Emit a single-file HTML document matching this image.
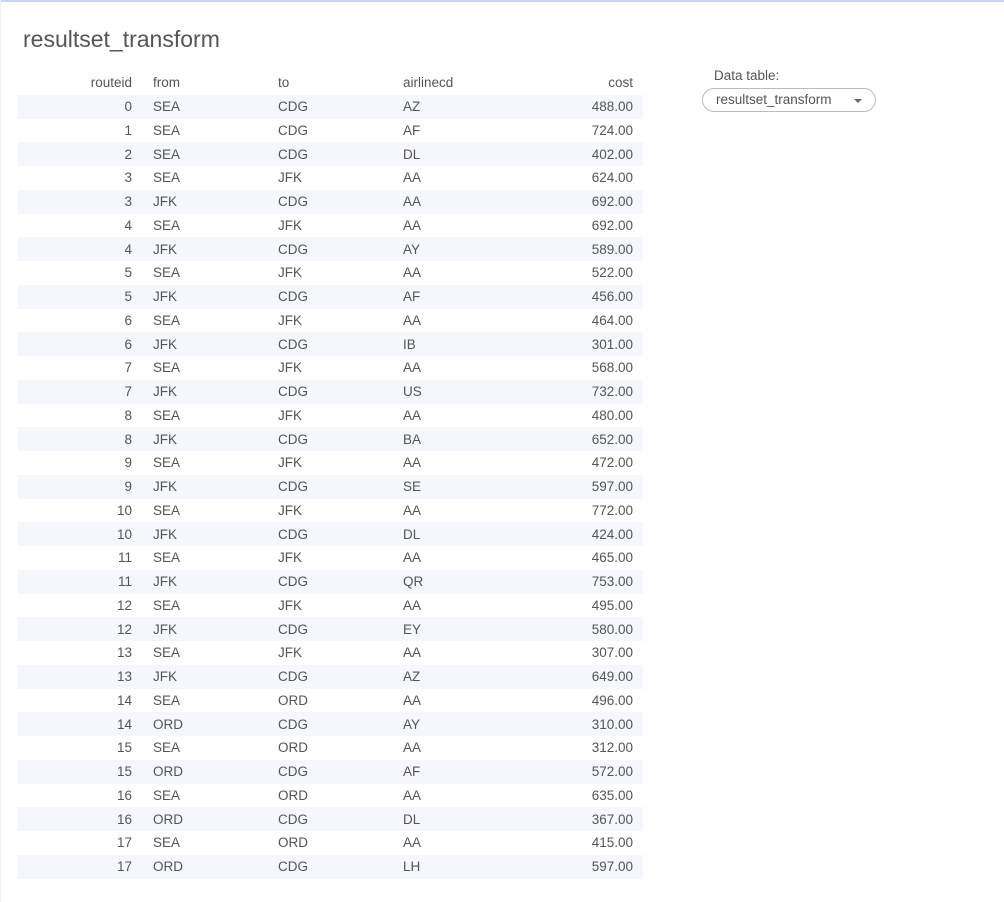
<!DOCTYPE html>
<html><head><style>
body{margin:0;width:1004px;height:902px;background:#fff;font-family:"Liberation Sans",sans-serif;color:#555;position:relative;overflow:hidden}
.top{position:absolute;left:0;top:0;width:1004px;height:2px;background:#c9d4ee}
.lb{position:absolute;left:0;top:0;width:1px;height:902px;background:#eceff5}
h1{position:absolute;left:23px;top:26px;margin:0;font-weight:normal;font-size:23px;color:#555}
table{position:absolute;left:18px;top:71px;border-collapse:collapse;font-size:13.5px;width:625px;table-layout:fixed}
td,th{padding:0;height:23.75px;white-space:nowrap;box-sizing:border-box}
th{font-weight:normal;text-align:left;color:#555}
tbody tr:nth-child(odd){background:#f5f7fc}
.c1{width:114px;text-align:right}
.c2{padding-left:21px;width:146px}
.c3{width:125px}
.c4{width:125px}
.c5{width:115px;padding-right:10px;text-align:right}
.lab{position:absolute;left:714px;top:68px;font-size:13.5px;color:#555}
.sel{position:absolute;left:702px;top:88px;width:174px;height:24px;border:1px solid #bbb;border-radius:12px;box-sizing:border-box;font-size:13.5px;padding-left:13px;line-height:22px;color:#555}
.sel:after{content:"";position:absolute;right:13px;top:10px;border-left:4px solid transparent;border-right:4px solid transparent;border-top:4px solid #666}
</style></head><body>
<div class="top"></div><div class="lb"></div>
<h1>resultset_transform</h1>
<table><thead><tr><th class="c1">routeid</th><th class="c2">from</th><th class="c3">to</th><th class="c4">airlinecd</th><th class="c5">cost</th></tr></thead><tbody>
<tr><td class="c1">0</td><td class="c2">SEA</td><td class="c3">CDG</td><td class="c4">AZ</td><td class="c5">488.00</td></tr>
<tr><td class="c1">1</td><td class="c2">SEA</td><td class="c3">CDG</td><td class="c4">AF</td><td class="c5">724.00</td></tr>
<tr><td class="c1">2</td><td class="c2">SEA</td><td class="c3">CDG</td><td class="c4">DL</td><td class="c5">402.00</td></tr>
<tr><td class="c1">3</td><td class="c2">SEA</td><td class="c3">JFK</td><td class="c4">AA</td><td class="c5">624.00</td></tr>
<tr><td class="c1">3</td><td class="c2">JFK</td><td class="c3">CDG</td><td class="c4">AA</td><td class="c5">692.00</td></tr>
<tr><td class="c1">4</td><td class="c2">SEA</td><td class="c3">JFK</td><td class="c4">AA</td><td class="c5">692.00</td></tr>
<tr><td class="c1">4</td><td class="c2">JFK</td><td class="c3">CDG</td><td class="c4">AY</td><td class="c5">589.00</td></tr>
<tr><td class="c1">5</td><td class="c2">SEA</td><td class="c3">JFK</td><td class="c4">AA</td><td class="c5">522.00</td></tr>
<tr><td class="c1">5</td><td class="c2">JFK</td><td class="c3">CDG</td><td class="c4">AF</td><td class="c5">456.00</td></tr>
<tr><td class="c1">6</td><td class="c2">SEA</td><td class="c3">JFK</td><td class="c4">AA</td><td class="c5">464.00</td></tr>
<tr><td class="c1">6</td><td class="c2">JFK</td><td class="c3">CDG</td><td class="c4">IB</td><td class="c5">301.00</td></tr>
<tr><td class="c1">7</td><td class="c2">SEA</td><td class="c3">JFK</td><td class="c4">AA</td><td class="c5">568.00</td></tr>
<tr><td class="c1">7</td><td class="c2">JFK</td><td class="c3">CDG</td><td class="c4">US</td><td class="c5">732.00</td></tr>
<tr><td class="c1">8</td><td class="c2">SEA</td><td class="c3">JFK</td><td class="c4">AA</td><td class="c5">480.00</td></tr>
<tr><td class="c1">8</td><td class="c2">JFK</td><td class="c3">CDG</td><td class="c4">BA</td><td class="c5">652.00</td></tr>
<tr><td class="c1">9</td><td class="c2">SEA</td><td class="c3">JFK</td><td class="c4">AA</td><td class="c5">472.00</td></tr>
<tr><td class="c1">9</td><td class="c2">JFK</td><td class="c3">CDG</td><td class="c4">SE</td><td class="c5">597.00</td></tr>
<tr><td class="c1">10</td><td class="c2">SEA</td><td class="c3">JFK</td><td class="c4">AA</td><td class="c5">772.00</td></tr>
<tr><td class="c1">10</td><td class="c2">JFK</td><td class="c3">CDG</td><td class="c4">DL</td><td class="c5">424.00</td></tr>
<tr><td class="c1">11</td><td class="c2">SEA</td><td class="c3">JFK</td><td class="c4">AA</td><td class="c5">465.00</td></tr>
<tr><td class="c1">11</td><td class="c2">JFK</td><td class="c3">CDG</td><td class="c4">QR</td><td class="c5">753.00</td></tr>
<tr><td class="c1">12</td><td class="c2">SEA</td><td class="c3">JFK</td><td class="c4">AA</td><td class="c5">495.00</td></tr>
<tr><td class="c1">12</td><td class="c2">JFK</td><td class="c3">CDG</td><td class="c4">EY</td><td class="c5">580.00</td></tr>
<tr><td class="c1">13</td><td class="c2">SEA</td><td class="c3">JFK</td><td class="c4">AA</td><td class="c5">307.00</td></tr>
<tr><td class="c1">13</td><td class="c2">JFK</td><td class="c3">CDG</td><td class="c4">AZ</td><td class="c5">649.00</td></tr>
<tr><td class="c1">14</td><td class="c2">SEA</td><td class="c3">ORD</td><td class="c4">AA</td><td class="c5">496.00</td></tr>
<tr><td class="c1">14</td><td class="c2">ORD</td><td class="c3">CDG</td><td class="c4">AY</td><td class="c5">310.00</td></tr>
<tr><td class="c1">15</td><td class="c2">SEA</td><td class="c3">ORD</td><td class="c4">AA</td><td class="c5">312.00</td></tr>
<tr><td class="c1">15</td><td class="c2">ORD</td><td class="c3">CDG</td><td class="c4">AF</td><td class="c5">572.00</td></tr>
<tr><td class="c1">16</td><td class="c2">SEA</td><td class="c3">ORD</td><td class="c4">AA</td><td class="c5">635.00</td></tr>
<tr><td class="c1">16</td><td class="c2">ORD</td><td class="c3">CDG</td><td class="c4">DL</td><td class="c5">367.00</td></tr>
<tr><td class="c1">17</td><td class="c2">SEA</td><td class="c3">ORD</td><td class="c4">AA</td><td class="c5">415.00</td></tr>
<tr><td class="c1">17</td><td class="c2">ORD</td><td class="c3">CDG</td><td class="c4">LH</td><td class="c5">597.00</td></tr>
</tbody></table>
<div class="lab">Data table:</div>
<div class="sel">resultset_transform</div>
</body></html>
